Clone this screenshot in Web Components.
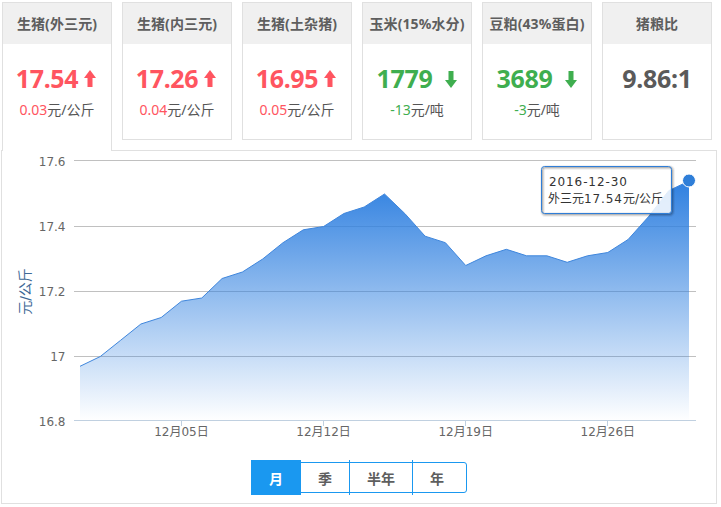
<!DOCTYPE html>
<html lang="zh">
<head>
<meta charset="utf-8">
<style>
html,body{margin:0;padding:0;background:#fff;}
body{font-family:"Noto Sans","Noto Sans CJK SC",sans-serif;color:#555;width:721px;height:507px;overflow:hidden;}
</style>
</head>
<body>
<price-board></price-board>
<template id="t-card">
<style>
:host{display:block;box-sizing:border-box;width:110px;height:138px;border:1px solid #e0e0e0;background:#fff;flex:none;}
:host([active]){height:149px;border-bottom:0;position:relative;z-index:1;}
.head{box-sizing:border-box;height:41px;padding-bottom:2px;background:#f0f0f0;display:flex;align-items:center;justify-content:center;font-size:14px;font-weight:700;letter-spacing:.1px;color:#5e5e5e;white-space:nowrap;}
.val{margin-top:17px;height:34px;padding-right:2px;display:flex;align-items:center;justify-content:center;gap:6px;font-size:25px;font-weight:700;letter-spacing:-.3px;line-height:34px;color:var(--c,#5a5a5a);}
.sub{margin-top:4px;height:22px;line-height:22px;text-align:center;font-size:14px;color:#555;white-space:nowrap;}
.sub b{font-weight:400;color:var(--c,#555);}
svg{display:block;flex:none;}
:host([dir-arrow="down"]) .val{gap:12px;padding-right:1px;}
:host(:not([dir-arrow])) .val{padding-right:0;}
</style>
<div class="head"></div>
<div class="val"></div>
<div class="sub"><b id="delta"></b><span id="unit"></span></div>
</template>
<template id="t-chart">
<style>
:host{display:block;box-sizing:border-box;width:716px;height:354px;margin-left:1px;border:1px solid #e0e0e0;background:#fff;}
svg{display:block;}
text{font-family:"DejaVu Sans","Noto Sans CJK SC",sans-serif;font-size:12px;fill:#666;}
</style>
<svg id="svg" width="714" height="352" viewBox="2 151 714 352"></svg>
</template>
<template id="t-range">
<style>
:host{display:flex;box-sizing:border-box;width:216px;height:31px;border:1px solid #1a98f0;border-radius:0 3px 3px 0;align-items:center;}
</style>
<slot></slot>
</template>
<template id="t-btn">
<style>
:host{display:flex;box-sizing:border-box;height:35px;align-items:center;justify-content:center;font-size:14px;font-weight:700;color:#5e5e5e;border-right:1px solid #1a98f0;flex:none;}
:host([active]){background:#1a98f0;color:#fff;border-right:0;}
:host([last]){border-right:0;padding-right:5px;}
</style>
<slot></slot>
</template>
<template id="t-board">
<style>
:host{display:block;position:relative;width:721px;height:507px;}
.row{display:flex;gap:10px;margin-left:2px;padding-top:2px;height:148px;}
.wrap{position:relative;}
.range{position:absolute;left:251px;top:312px;}
</style>
<div class="row">
<price-card active title-text="生猪(外三元)" value="17.54" dir="up" delta="0.03" unit="元/公斤"></price-card>
<price-card title-text="生猪(内三元)" value="17.26" dir="up" delta="0.04" unit="元/公斤"></price-card>
<price-card title-text="生猪(土杂猪)" value="16.95" dir="up" delta="0.05" unit="元/公斤"></price-card>
<price-card title-text="玉米(15%水分)" value="1779" dir="down" delta="-13" unit="元/吨"></price-card>
<price-card title-text="豆粕(43%蛋白)" value="3689" dir="down" delta="-3" unit="元/吨"></price-card>
<price-card title-text="猪粮比" value="9.86:1"></price-card>
</div>
<div class="wrap">
<price-chart></price-chart>
<div class="range"><range-group>
<range-btn active style="width:50px;margin-left:-1px">月</range-btn>
<range-btn style="width:49px">季</range-btn>
<range-btn style="width:63px">半年</range-btn>
<range-btn last style="width:53px">年</range-btn>
</range-group></div>
</div>
</template>
<script>
const T=id=>document.getElementById(id).content.cloneNode(true);
class PriceCard extends HTMLElement{
  constructor(){super();this.attachShadow({mode:'open'}).appendChild(T('t-card'));}
  connectedCallback(){
    const s=this.shadowRoot,d=this.getAttribute('dir');
    const c=d==='up'?'#ff5560':d==='down'?'#3fae4f':'#5a5a5a';
    this.style.setProperty('--c',c);
    s.querySelector('.head').textContent=this.getAttribute('title-text');
    const v=s.querySelector('.val');
    const sp=document.createElement('span');sp.textContent=this.getAttribute('value');v.appendChild(sp);
    if(d){
      if(d==='down')this.setAttribute('dir-arrow','down');
      else this.setAttribute('dir-arrow','up');
      v.insertAdjacentHTML('beforeend',d==='up'
        ?'<svg width="12" height="17" viewBox="0 0 12 17"><path fill="#ff5560" d="M6 0L12 8H8.5V17H3.5V8H0Z"/></svg>'
        :'<svg width="12" height="17" viewBox="0 0 12 17" style="margin-top:3px"><path fill="#3fae4f" d="M3.5 0H8.5V9H12L6 17L0 9H3.5Z"/></svg>');
    }
    s.getElementById('delta').textContent=this.getAttribute('delta')||'';
    s.getElementById('unit').textContent=this.getAttribute('unit')||'';
  }
}
customElements.define('price-card',PriceCard);
class RangeBtn extends HTMLElement{constructor(){super();this.attachShadow({mode:'open'}).appendChild(T('t-btn'));}}
customElements.define('range-btn',RangeBtn);
class RangeGroup extends HTMLElement{constructor(){super();this.attachShadow({mode:'open'}).appendChild(T('t-range'));}}
customElements.define('range-group',RangeGroup);
class PriceChart extends HTMLElement{
  constructor(){super();this.attachShadow({mode:'open'}).appendChild(T('t-chart'));}
  connectedCallback(){
    const data=[16.97,17,17.05,17.1,17.12,17.17,17.18,17.24,17.26,17.3,17.35,17.39,17.4,17.44,17.46,17.5,17.44,17.37,17.35,17.28,17.31,17.33,17.31,17.31,17.29,17.31,17.32,17.36,17.43,17.51,17.54];
    const X=i=>80+i*20.3, Y=v=>421.5-(v-16.8)*325;
    const pts=data.map((v,i)=>X(i).toFixed(1)+','+Y(v).toFixed(1));
    let h='<defs><linearGradient id="g" x1="0" y1="0" x2="0" y2="1"><stop offset="0" stop-color="#2f80e0"/><stop offset="1" stop-color="#2f80e0" stop-opacity="0"/></linearGradient></defs>';
    [17.6,17.4,17.2,17].forEach(v=>{const y=Math.round(Y(v))-.5;h+=`<line x1="74" x2="696" y1="${y}" y2="${y}" stroke="#c0c0c0"/>`;});
    h+=`<path d="M80,421 L${pts.join(' L')} L${X(30)},421Z" fill="url(#g)"/>`;
    h+=`<polyline points="${pts.join(' ')}" fill="none" stroke="#3f86dc" stroke-width="1"/>`;
    h+='<line x1="74" x2="696" y1="420.5" y2="420.5" stroke="#c0d0e0"/>';
    [5,12,19,26].forEach(d=>{const x=Math.floor(X(d))+.5;h+=`<line x1="${x}" x2="${x}" y1="421" y2="426" stroke="#c0d0e0"/>`;});
    [['17.6',161],['17.4',226],['17.2',291],['17',356],['16.8',421]].forEach(([t,y])=>{h+=`<text x="65.5" y="${y+5}" text-anchor="end">${t}</text>`;});
    [[5,'12月05日'],[12,'12月12日'],[19,'12月19日'],[26,'12月26日']].forEach(([d,t])=>{h+=`<text x="${X(d)}" y="436" text-anchor="middle">${t}</text>`;});
    h+='<text transform="translate(30,291.5) rotate(-90)" text-anchor="middle" style="fill:#3f6a97;font-size:14px">元/公斤</text>';
    h+=`<circle cx="${X(30)}" cy="180.5" r="6.5" fill="#2f7ed8" stroke="#fff" stroke-width="1"/>`;
    const rect='x="541.5" y="166.5" width="130" height="47" rx="3"';
    h+=`<rect ${rect} fill="#fff" fill-opacity=".85" stroke="none"/>`;
    [[5,.05],[3,.1],[1,.15]].forEach(([w,o])=>{h+=`<rect ${rect} transform="translate(1,1)" fill="none" stroke="#000" stroke-opacity="${o}" stroke-width="${w}"/>`;});
    h+=`<rect ${rect} fill="none" stroke="#2f7ed8"/>`;
    h+='<text x="549" y="186" style="fill:#333"><tspan letter-spacing=".9">2016-12-30</tspan></text><text x="548" y="203" style="fill:#333">外三元<tspan letter-spacing=".9">17.54</tspan>元/公斤</text>';
    this.shadowRoot.getElementById('svg').innerHTML=h;
  }
}
customElements.define('price-chart',PriceChart);
class PriceBoard extends HTMLElement{constructor(){super();this.attachShadow({mode:'open'}).appendChild(T('t-board'));}}
customElements.define('price-board',PriceBoard);
</script>
</body>
</html>
